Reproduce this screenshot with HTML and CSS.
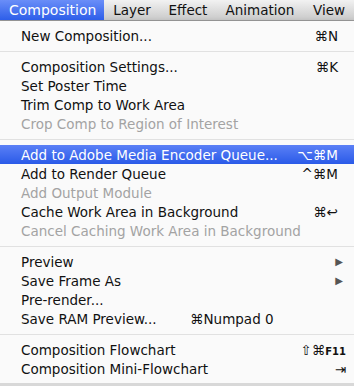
FILE: index.html
```html
<!DOCTYPE html>
<html lang="en">
<head>
    <meta charset="UTF-8">
    <title>Composition menu</title>
    <link rel="stylesheet" href="styles.css">
</head>
<body>
    <div class="menubar">
        <span class="menu-title active">Composition</span>
        <span class="menu-title layer">Layer</span>
        <span class="menu-title effect">Effect</span>
        <span class="menu-title animation">Animation</span>
        <span class="menu-title view">View</span>
    </div>
    <div class="dropdown">
        <div class="item"><span>New Composition...</span><span class="key">⌘N</span></div>
        <div class="sep"></div>
        <div class="item"><span>Composition Settings...</span><span class="key">⌘K</span></div>
        <div class="item"><span>Set Poster Time</span></div>
        <div class="item"><span>Trim Comp to Work Area</span></div>
        <div class="item disabled"><span>Crop Comp to Region of Interest</span></div>
        <div class="sep"></div>
        <div class="item selected"><span>Add to Adobe Media Encoder Queue...</span><span class="key">⌥⌘M</span></div>
        <div class="item"><span>Add to Render Queue</span><span class="key">^⌘M</span></div>
        <div class="item disabled"><span>Add Output Module</span></div>
        <div class="item"><span>Cache Work Area in Background</span><span class="key">⌘↩</span></div>
        <div class="item disabled"><span>Cancel Caching Work Area in Background</span></div>
        <div class="sep"></div>
        <div class="item"><span>Preview</span><span class="arrow">▶</span></div>
        <div class="item"><span>Save Frame As</span><span class="arrow">▶</span></div>
        <div class="item"><span>Pre-render...</span></div>
        <div class="item"><span class="wide">Save RAM Preview...</span><span>⌘Numpad 0</span></div>
        <div class="sep"></div>
        <div class="item"><span>Composition Flowchart</span><span class="key outset">⇧⌘<small>F11</small></span></div>
        <div class="item"><span>Composition Mini-Flowchart</span><span class="key outset">⇥</span></div>
    </div>
</body>
</html>
```

FILE: styles.css
```css
body {
    margin: 0;
    background-color: #d8d8d8;
    font-family: "DejaVu Sans", "Liberation Sans", sans-serif;
    overflow: hidden;
}
.menubar {
    display: flex;
    height: 21px;
    background: linear-gradient(#f2f2f2, #c9c9c9);
    border-bottom: 1px solid #9a9a9a;
    box-sizing: border-box;
    font-size: 13.5px;
    line-height: 21px;
    color: #111;
}
.menu-title {
    text-align: center;
    white-space: nowrap;
}
.menu-title.active {
    width: 104px;
    padding-left: 9px;
    box-sizing: border-box;
    text-align: left;
    font-size: 14px;
    color: #fff;
    background: linear-gradient(#6a8ef8, #2d5ee9);
}
.layer { width: 56px; }
.effect { width: 56px; }
.animation { width: 88px; }
.view { width: 50px; }
.dropdown {
    background-color: #fafafa;
    padding: 5px 0;
    font-size: 13.5px;
    color: #111;
    box-shadow: 0 3px 6px rgba(0, 0, 0, 0.35);
}
.item {
    display: flex;
    align-items: center;
    height: 19px;
    padding: 0 16px 0 21px;
    white-space: nowrap;
}
.item .key {
    margin-left: auto;
}
.item .outset {
    margin-right: -8px;
}
.item .arrow {
    margin-left: auto;
    font-size: 10px;
    color: #555;
    margin-right: -5px;
}
.item small {
    font-size: 10px;
    font-weight: bold;
}
.item .wide {
    width: 169px;
}
.disabled {
    color: #a3a3a3;
}
.selected {
    color: #fff;
    background: linear-gradient(#5b80f6, #2a5ae8);
}
.sep {
    height: 1px;
    background-color: #e1e1e1;
    margin: 6px 0 5px;
}
```
